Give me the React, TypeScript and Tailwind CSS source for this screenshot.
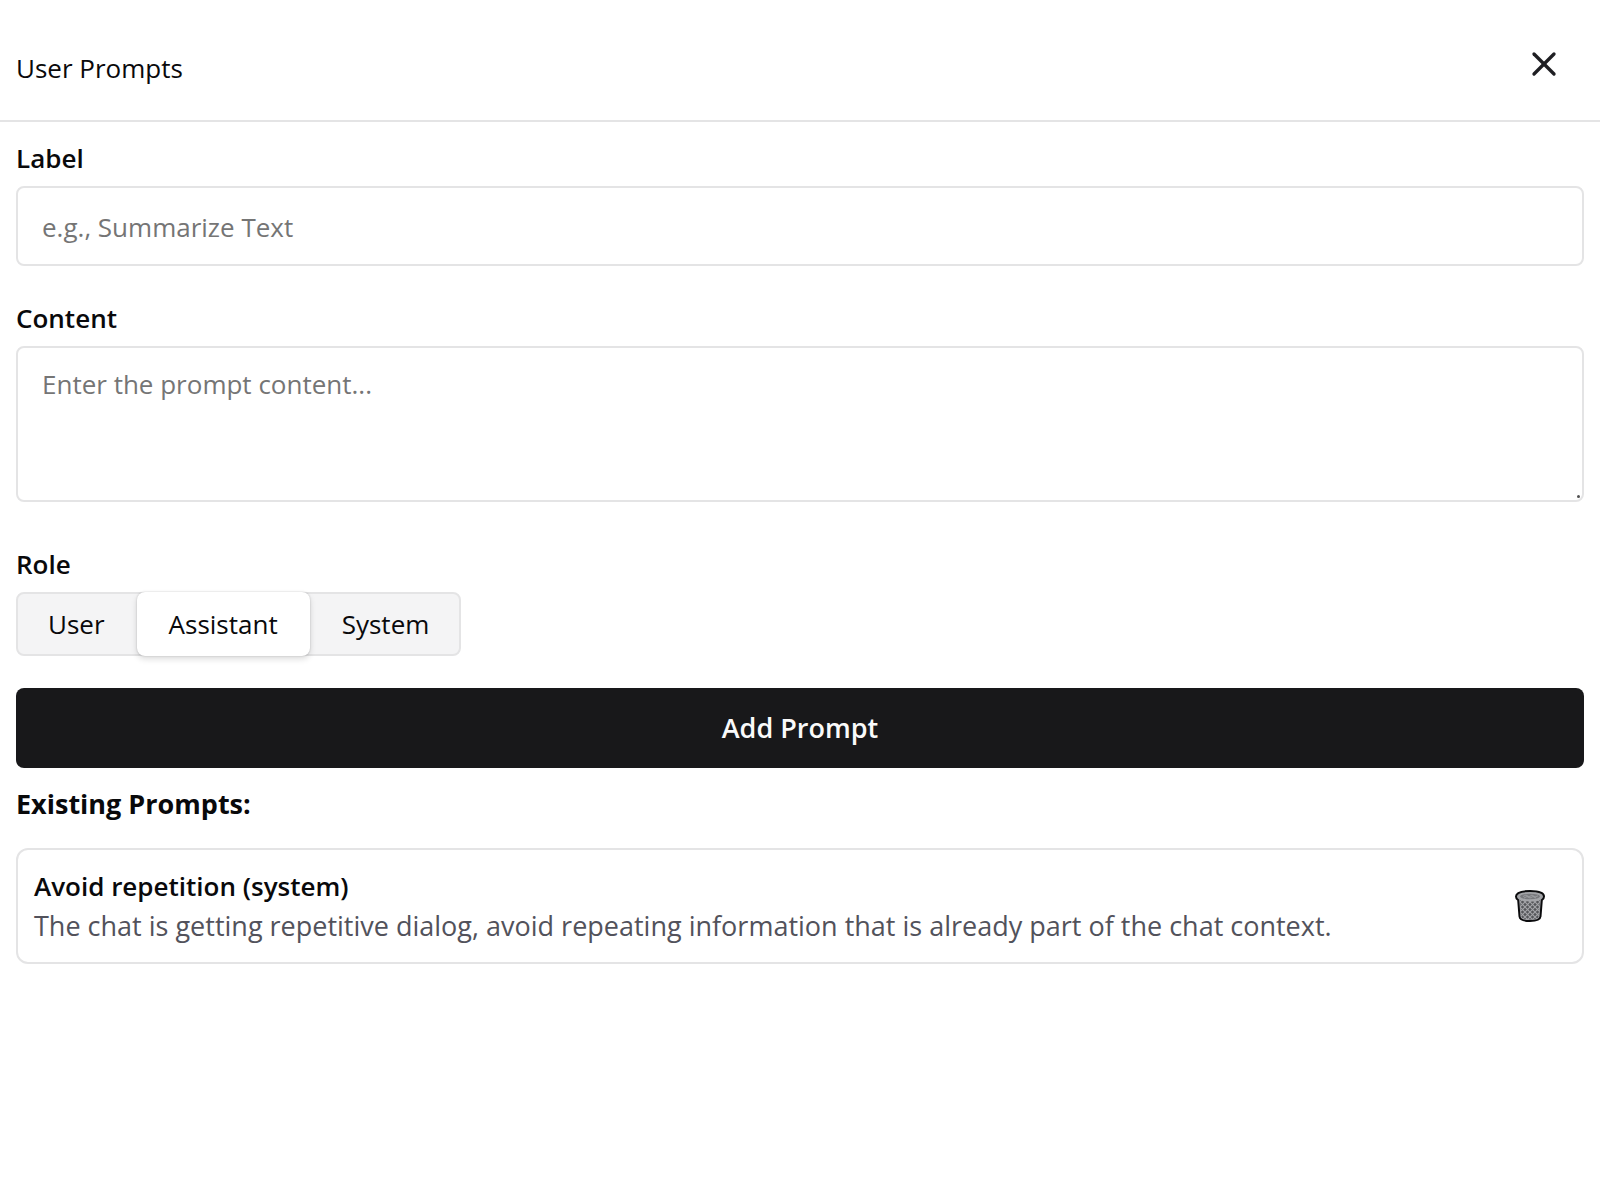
import React, { useState } from "react";
import { X } from "lucide-react";

const roles = ["User", "Assistant", "System"];

const initialPrompts = [
  {
    label: "Avoid repetition",
    role: "system",
    content:
      "The chat is getting repetitive dialog, avoid repeating information that is already part of the chat context.",
  },
];

const Wastebasket = () => (
  <svg viewBox="0 0 30 32" className="h-8 w-[30px]" aria-hidden="true">
    <defs>
      <pattern
        id="mesh"
        width="5"
        height="5"
        patternUnits="userSpaceOnUse"
        patternTransform="translate(15 12)"
      >
        <rect width="5" height="5" fill="#55565a" />
        <path d="M0 0l5 5M5 0L0 5" stroke="#a3a4a8" strokeWidth="1.1" />
      </pattern>
    </defs>
    <path
      d="M1 6.5C1 2.6 7 1 15 1s14 1.600 14 5.500c0 1.800-.7 2.800-2.200 3.600L25.500 26.500C25.200 29.800 21.500 31 15 31S4.800 29.800 4.500 26.500L3.200 10.100C1.700 9.300 1 8.300 1 6.500z"
      fill="#a3a4a8"
      stroke="#0b0b0d"
      strokeWidth="2"
    />
    <path
      d="M5 10c2 1 6 1.500 10 1.500s8-.5 10-1.500l-1.300 16.200c-.2 2.300-3.400 3.200-8.700 3.200s-8.500-.9-8.700-3.200z"
      fill="url(#mesh)"
    />
    <ellipse cx="15" cy="6.500" rx="10" ry="2.700" fill="#77787c" />
    <path
      d="M8 6.500l3-1.500 3 2 3-2 3 2 3-1.200M9 8l3-1.500 3 1.500 3-1.500 3 1.500"
      fill="none"
      stroke="#a3a4a8"
      strokeWidth="0.8"
    />
  </svg>
);

const App = () => {
  const [label, setLabel] = useState("");
  const [content, setContent] = useState("");
  const [role, setRole] = useState("Assistant");
  const [prompts, setPrompts] = useState(initialPrompts);

  const addPrompt = (e: React.FormEvent) => {
    e.preventDefault();
    if (!label || !content) return;
    setPrompts([...prompts, { label, content, role: role.toLowerCase() }]);
    setLabel("");
    setContent("");
  };

  return (
    <div className="min-h-screen bg-white font-['Open_Sans',sans-serif] text-[26px] leading-10 text-[#09090b]">
      <header className="flex items-end justify-between border-b-2 border-[#e4e4e5] px-4 pt-6 pb-4">
        <h1 className="pb-4">User Prompts</h1>
        <button
          type="button"
          aria-label="Close"
          className="flex size-20 items-center justify-center text-[#1f1f23]"
        >
          <X className="size-10" />
        </button>
      </header>

      <main className="px-4 pt-4">
        <form onSubmit={addPrompt} className="flex flex-col gap-8">
          <div className="flex flex-col gap-2">
            <label htmlFor="label" className="font-semibold">
              Label
            </label>
            <input
              id="label"
              type="text"
              value={label}
              onChange={(e) => setLabel(e.target.value)}
              placeholder="e.g., Summarize Text"
              className="h-20 w-full rounded-lg border-2 border-[#e4e4e5] px-6 pt-0.5 placeholder:text-[#757575]"
            />
          </div>

          <div className="flex flex-col gap-2 pb-2.5">
            <label htmlFor="content" className="font-semibold">
              Content
            </label>
            <div className="relative flex">
              <textarea
                id="content"
                value={content}
                onChange={(e) => setContent(e.target.value)}
                placeholder="Enter the prompt content..."
                className="h-[156px] w-full resize-none rounded-lg border-2 border-[#e4e4e5] px-6 py-4 placeholder:text-[#757575]"
              />
              <span className="absolute right-1 bottom-1 size-[3px] rounded-full bg-[#505050]" />
            </div>
          </div>

          <fieldset>
            <legend className="mb-2 font-semibold">Role</legend>
            <div className="flex w-fit rounded-lg border-2 border-[#e4e4e5] bg-[#f4f4f5]">
              {roles.map((r) => (
                <label
                  key={r}
                  className={`relative -my-0.5 cursor-pointer rounded-lg px-8 py-3 first:pl-[30px] last:pr-[30px] ${
                    role === r
                      ? "bg-white shadow-[0_0_2px_rgba(0,0,0,0.2),0_3px_6px_rgba(0,0,0,0.14)]"
                      : ""
                  }`}
                >
                  <input
                    type="radio"
                    name="role"
                    value={r}
                    checked={role === r}
                    onChange={() => setRole(r)}
                    className="sr-only"
                  />
                  {r}
                </label>
              ))}
            </div>
          </fieldset>

          <button
            type="submit"
            className="h-20 w-full rounded-lg bg-[#18181a] text-[27px] font-semibold text-[#fafafa]"
          >
            Add Prompt
          </button>
        </form>

        <h2 className="mt-4 mb-6 text-[27px] font-bold">Existing Prompts:</h2>
        <ul className="flex flex-col gap-4">
          {prompts.map((prompt, i) => (
            <li
              key={i}
              className="flex items-center justify-between rounded-xl border-2 border-[#e4e4e5] p-4"
            >
              <div>
                <h3 className="font-semibold">
                  {prompt.label} ({prompt.role})
                </h3>
                <p className="text-[27px] text-[#52525b]">{prompt.content}</p>
              </div>
              <button
                type="button"
                aria-label={`Delete ${prompt.label}`}
                onClick={() => setPrompts(prompts.filter((_, n) => n !== i))}
                className="flex h-16 w-[72px] shrink-0 items-center justify-center"
              >
                <Wastebasket />
              </button>
            </li>
          ))}
        </ul>
      </main>
    </div>
  );
};

export default App;
